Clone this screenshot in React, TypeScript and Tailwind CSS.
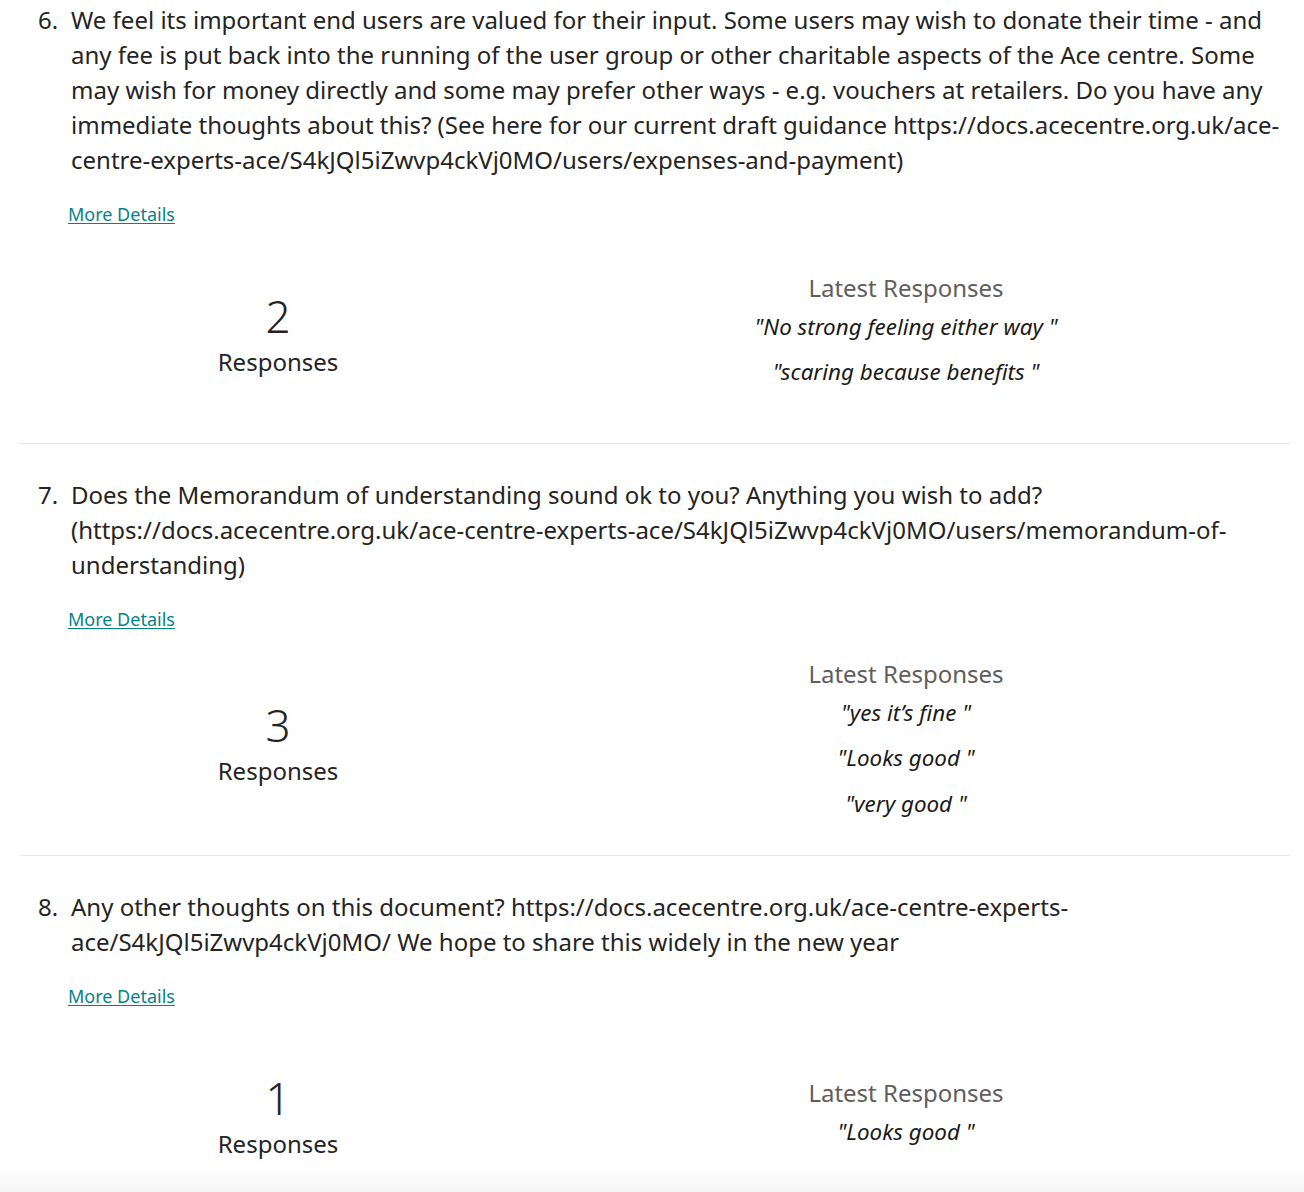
import React from "react";

type Question = {
    num: number;
    text: string;
    count: number;
    latest: string[];
};

const questions: Question[] = [
    {
        num: 6,
        text: "We feel its important end users are valued for their input. Some users may wish to donate their time - and any fee is put back into the running of the user group or other charitable aspects of the Ace centre. Some may wish for money directly and some may prefer other ways - e.g. vouchers at retailers. Do you have any immediate thoughts about this? (See here for our current draft guidance https://docs.acecentre.org.uk/ace-centre-experts-ace/S4kJQl5iZwvp4ckVj0MO/users/expenses-and-payment)",
        count: 2,
        latest: ["No strong feeling either way ", "scaring because benefits "],
    },
    {
        num: 7,
        text: "Does the Memorandum of understanding sound ok to you? Anything you wish to add? (https://docs.acecentre.org.uk/ace-centre-experts-ace/S4kJQl5iZwvp4ckVj0MO/users/memorandum-of-understanding)",
        count: 3,
        latest: ["yes it\u2019s fine ", "Looks good ", "very good "],
    },
    {
        num: 8,
        text: "Any other thoughts on this document? https://docs.acecentre.org.uk/ace-centre-experts-ace/S4kJQl5iZwvp4ckVj0MO/ We hope to share this widely in the new year",
        count: 1,
        latest: ["Looks good "],
    },
];

function QuestionBlock({ q, first }: { q: Question; first: boolean }) {
    return (
        <section className={`border-b border-[#e8e8e8] ${first ? "pt-[2px]" : "pt-[33px]"}`}>
            <div className="flex pl-[18px]">
                <span className="w-[33px] shrink-0 text-[24px] leading-[35px]">{q.num}.</span>
                <p className="flex-1 text-[24px] leading-[35px]">{q.text}</p>
            </div>

            <div className="pl-[48px] mt-[25px]">
                <a href="#" className="text-[18px] leading-[25px] text-[#038387] underline underline-offset-2">
                    More Details
                </a>
            </div>

            {/* stats: min height box, grows with number of responses */}
            <div className="pt-[26px] pb-[17.5px]">
                <div className="flex items-center min-h-[172px]">
                    <div className="ml-[48px] w-[420px] flex flex-col items-center">
                        <div className="text-[44px] leading-[44px] font-light">{q.count}</div>
                        <div className="mt-[2px] text-[24px] leading-[44px]">Responses</div>
                    </div>
                    <div className="ml-[112px] w-[612px] flex flex-col items-center pb-[18px]">
                        <div className="text-[24px] leading-[32px] text-[#605e5c]">Latest Responses</div>
                        {q.latest.map((r, i) => (
                            <div
                                key={i}
                                className={`text-[22.4px] leading-[32px] italic text-[#1b1a19] whitespace-pre ${i === 0 ? "mt-[7px]" : "mt-[13.5px]"}`}
                            >
                                "{r}"
                            </div>
                        ))}
                    </div>
                </div>
            </div>
        </section>
    );
}

export default function App() {
    return (
        <div className="min-h-screen bg-white text-[#252423] font-['Noto_Sans',sans-serif]">
            <div className="ml-5 mr-[14px]">
                {questions.map((q, i) => (
                    <QuestionBlock key={q.num} q={q} first={i === 0} />
                ))}
            </div>
            <div className="fixed bottom-0 left-0 right-0 h-[26px] bg-gradient-to-b from-white/0 to-[#f6f6f6] pointer-events-none" />
        </div>
    );
}
